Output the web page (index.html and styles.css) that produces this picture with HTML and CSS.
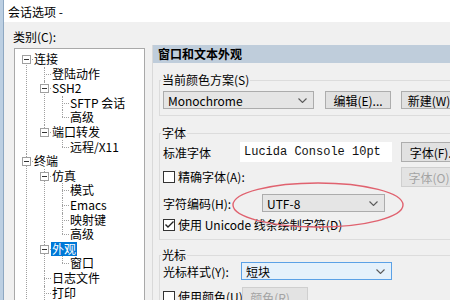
FILE: index.html
```html
<!DOCTYPE html>
<html lang="zh-CN">
  <head>
    <meta charset="UTF-8" />
    <meta name="viewport" content="width=device-width, initial-scale=1.0" />
    <title>会话选项</title>

    <link rel="stylesheet" href="styles.css">
  </head>

  <body>
    <div class="screen">
      <div class="edge"></div>

      <div class="dialog">
        <div class="titlebar">会话选项 -</div>

        <div class="dialog-body">
          <!-- category tree -->
          <div class="side">
            <div class="side-label">类别(C):</div>
            <div class="tree">
              <ul>
                <li>
                  <div class="item"><i class="box"></i>连接</div>
                  <ul>
                    <li><div class="item">登陆动作</div></li>
                    <li>
                      <div class="item"><i class="box"></i>SSH2</div>
                      <ul>
                        <li><div class="item">SFTP 会话</div></li>
                        <li><div class="item">高级</div></li>
                      </ul>
                    </li>
                    <li>
                      <div class="item"><i class="box"></i>端口转发</div>
                      <ul>
                        <li><div class="item">远程/X11</div></li>
                      </ul>
                    </li>
                  </ul>
                </li>
                <li>
                  <div class="item"><i class="box"></i>终端</div>
                  <ul>
                    <li>
                      <div class="item"><i class="box"></i>仿真</div>
                      <ul>
                        <li><div class="item">模式</div></li>
                        <li><div class="item">Emacs</div></li>
                        <li><div class="item">映射键</div></li>
                        <li><div class="item">高级</div></li>
                      </ul>
                    </li>
                    <li>
                      <div class="item sel"><i class="box"></i><span>外观</span></div>
                      <ul>
                        <li><div class="item">窗口</div></li>
                      </ul>
                    </li>
                    <li><div class="item">日志文件</div></li>
                    <li><div class="item">打印</div></li>
                    <li><div class="item">X/Y/Zmodem</div></li>
                  </ul>
                </li>
                <li><div class="item"><i class="box"></i>文件传输</div></li>
              </ul>
            </div>
          </div>

          <!-- settings page -->
          <div class="panel">
            <div class="panel-head">窗口和文本外观</div>

            <fieldset class="group g-scheme">
              <legend>当前颜色方案(S)</legend>
              <div class="row">
                <div class="combo w-scheme">
                  <span>Monochrome</span>
                  <svg class="chev" width="9" height="5" viewBox="0 0 9 5"><polyline points="0.5,0.5 4.5,4.5 8.5,0.5" /></svg>
                </div>
                <button class="btn b-edit">编辑(E)...</button>
                <button class="btn b-new">新建(W)...</button>
              </div>
            </fieldset>

            <fieldset class="group g-font">
              <legend>字体</legend>
              <div class="row r-font">
                <span class="lbl w-std">标准字体</span>
                <div class="font-box">Lucida Console 10pt</div>
                <button class="btn">字体(F)...</button>
              </div>
              <div class="row r-exact">
                <label class="check-row w-exact"><span class="check"></span>精确字体(A):</label>
                <button class="btn" disabled>字体(O)...</button>
              </div>
              <div class="row r-enc">
                <span class="lbl w-enc">字符编码(H):</span>
                <div class="combo w-utf">
                  <span>UTF-8</span>
                  <svg class="chev" width="9" height="5" viewBox="0 0 9 5"><polyline points="0.5,0.5 4.5,4.5 8.5,0.5" /></svg>
                </div>
              </div>
              <div class="row r-uni">
                <label class="check-row">
                  <span class="check"><svg width="11" height="11" viewBox="0 0 11 11"><polyline points="1.5,5.5 4,8 9.5,2.5" /></svg></span>使用 Unicode 线条绘制字符(D)
                </label>
              </div>
            </fieldset>

            <fieldset class="group g-cursor">
              <legend>光标</legend>
              <div class="row r-style">
                <span class="lbl w-cur">光标样式(Y):</span>
                <div class="combo focus w-shape">
                  <span>短块</span>
                  <svg class="chev" width="9" height="5" viewBox="0 0 9 5"><polyline points="0.5,0.5 4.5,4.5 8.5,0.5" /></svg>
                </div>
              </div>
              <div class="row r-color">
                <label class="check-row w-color"><span class="check"></span>使用颜色(U):</label>
                <button class="btn" disabled>颜色(R)...</button>
              </div>
            </fieldset>

            <!-- red hand-drawn mark around the encoding box -->
            <svg class="mark" width="260" height="60" viewBox="0 0 260 60">
              <ellipse cx="165" cy="28" rx="85" ry="22" />
            </svg>
          </div>
        </div>
      </div>
    </div>
  </body>
</html>
```

FILE: styles.css
```css
* {
  box-sizing: border-box;
}

html,
body {
  margin: 0;
  height: 300px;
  overflow: hidden;
}

body {
  font-family: "Noto Sans CJK SC", "Noto Sans", sans-serif;
  font-size: 12px;
  color: #000;
  background-color: #f0f0f0;
}

.screen {
  display: flex;
  width: 700px;
  height: 300px;
}

.edge {
  width: 4px;
  background-color: #bccfe2;
  border-right: 1px solid #8ea8c2;
}

.dialog {
  flex: 1;
  display: flex;
  flex-direction: column;
}

.titlebar {
  height: 22px;
  line-height: 24px;
  padding-left: 4px;
  background-color: #fff;
}

.dialog-body {
  flex: 1;
  display: flex;
}

/* left: category tree */
.side {
  width: 148px;
  padding: 8px 0 0 10px;
}

.side-label {
  line-height: 14px;
  margin-left: -1px;
}

.tree {
  margin-top: 4px;
  width: 131px;
  height: 260px;
  padding-top: 3px;
  background-color: #fff;
  border: 1px solid #a9a9a9;
  overflow: hidden;
}

.tree ul {
  list-style: none;
  margin: 0;
  padding: 0 0 0 18px;
}

.tree > ul {
  padding-left: 2px;
}

.tree li {
  position: relative;
}

.tree li::before {
  content: "";
  position: absolute;
  left: 9px;
  top: 0;
  bottom: 0;
  border-left: 1px dotted #a0a0a0;
}

.tree > ul > li:first-child::before {
  top: 7px;
}

.tree li:last-child::before {
  bottom: auto;
  height: 7px;
}

.tree .item {
  position: relative;
  height: 14.6px;
  line-height: 14.6px;
  padding-left: 17px;
  white-space: nowrap;
}

.tree .item::before {
  content: "";
  position: absolute;
  left: 9px;
  top: 7px;
  width: 7px;
  border-top: 1px dotted #a0a0a0;
}

.tree .box {
  position: absolute;
  z-index: 1;
  left: 5px;
  top: 3px;
  width: 9px;
  height: 9px;
  background-color: #fff;
  border: 1px solid #a0a0a0;
}

.tree .box::after {
  content: "";
  position: absolute;
  left: 1px;
  top: 3px;
  width: 5px;
  height: 1px;
  background-color: #333;
}

.tree .sel span {
  display: inline-block;
  height: 14px;
  line-height: 14px;
  padding: 0 1px;
  margin-left: -1px;
  color: #fff;
  background-color: #0078d7;
}

/* right: settings page */
.panel {
  position: relative;
  width: 420px;
  margin-top: 23px;
  border-left: 1px solid #d9d9d9;
}

.panel-head {
  height: 18px;
  line-height: 18px;
  padding-left: 5px;
  font-weight: bold;
  background-color: #bfcddb;
}

.group {
  width: 400px;
  min-width: 0;
  margin: 10px 0 0 6px;
  padding: 4px 0 6px 3px;
  border: 1px solid #dcdcdc;
}

.group legend {
  padding: 0 1px;
  margin-left: -2px;
  line-height: 14px;
}

.g-font {
  padding: 2px 0 8px 3px;
}

.g-cursor {
  margin-top: 8px;
  padding-top: 0;
}

.row {
  display: flex;
  align-items: center;
}

.lbl {
  flex: none;
}

.combo {
  display: flex;
  align-items: center;
  justify-content: space-between;
  height: 18px;
  padding: 0 6px 0 4px;
  background-color: #e5e5e5;
  border: 1px solid #acacac;
}

.combo.focus {
  background-color: #e5f1fb;
  border-color: #5ba1e6;
}

.chev {
  fill: none;
  stroke: #5a5a5a;
  stroke-width: 1.1;
}

.btn {
  flex: none;
  height: 18px;
  width: 66px;
  padding: 0;
  font: inherit;
  color: #000;
  background-color: #e1e1e1;
  border: 1px solid #adadad;
}

.btn:disabled {
  color: #a3a3a3;
  background-color: #e3e3e3;
  border-color: #cfcfcf;
}

.check-row {
  flex: none;
  display: flex;
  align-items: center;
  line-height: 14px;
  white-space: nowrap;
}

.check {
  flex: none;
  width: 12px;
  height: 12px;
  margin-right: 3px;
  background-color: #fff;
  border: 1px solid #333;
}

.check svg {
  display: block;
  margin: -0.5px 0 0 -0.5px;
  fill: none;
  stroke: #222;
  stroke-width: 1.4;
}

/* scheme row */
.w-scheme {
  width: 151px;
}

.b-edit {
  margin-left: 11px;
}

.b-new {
  margin-left: 10px;
}

/* font group */
.r-font {
  height: 20px;
}

.r-font .btn,
.r-exact .btn,
.r-color .btn {
  height: 20px;
}

.w-std {
  width: 77px;
}

.font-box {
  width: 152px;
  height: 20px;
  line-height: 20px;
  margin-right: 9px;
  padding-left: 4px;
  font-family: "Liberation Mono", monospace;
  font-size: 12px;
  color: #111;
  background-color: #fff;
}

.r-exact {
  height: 20px;
  margin-top: 5px;
}

.w-exact {
  width: 238px;
}

.r-enc {
  height: 18px;
  margin-top: 7px;
}

.w-enc {
  width: 99px;
}

.w-utf {
  width: 123px;
}

.r-uni {
  height: 13px;
  margin-top: 6px;
}

/* cursor group */
.r-style {
  height: 18px;
}

.w-cur {
  width: 78px;
}

.w-shape {
  width: 151px;
}

.r-color {
  height: 20px;
  margin-top: 7px;
}

.w-color {
  width: 79px;
}

.mark {
  position: absolute;
  left: 0;
  top: 132px;
  overflow: visible;
}

.mark ellipse {
  fill: none;
  stroke: #e0626f;
  stroke-width: 1.4;
}
```
